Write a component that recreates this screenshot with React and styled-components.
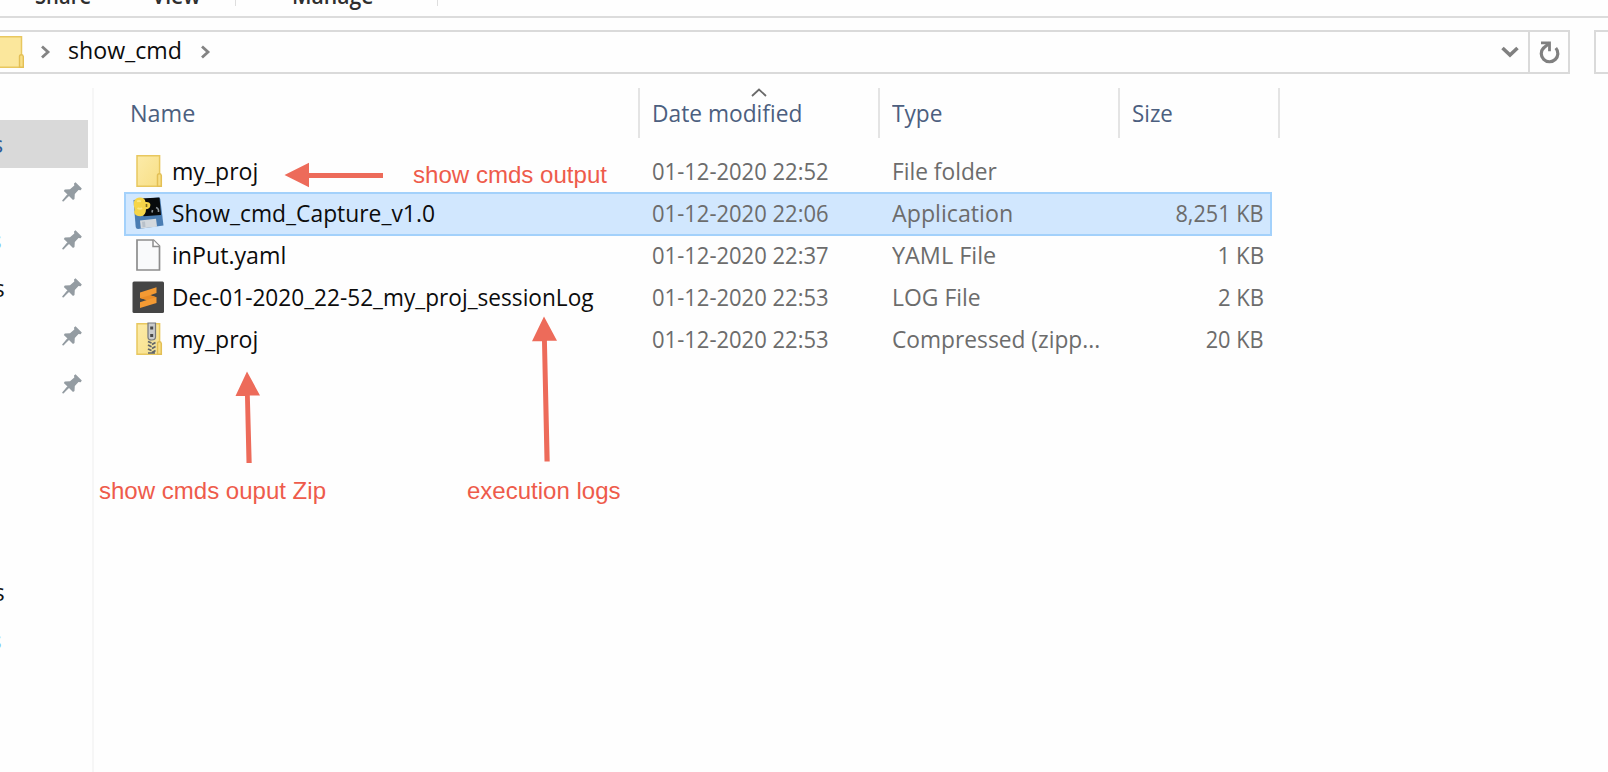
import React from "react";
import styled, { createGlobalStyle } from "styled-components";

const Global = createGlobalStyle`
  body { margin: 0; background: #fefefe; overflow: hidden; }
  * { box-sizing: border-box; }
`;

const Window = styled.div`
  position: relative;
  width: 1608px;
  height: 772px;
  overflow: hidden;
  display: flex;
  flex-direction: column;
  font: 23.5px/42px "Open Sans", "Noto Sans", sans-serif;
  color: #0c0c0c;
  white-space: nowrap;
`;

const Label = styled.span`
  display: inline-block;
  transform: scaleX(${(p) => p.$sx || 1});
  transform-origin: ${(p) => (p.$right ? "100%" : "0")} 50%;
`;

const Ribbon = styled.div`
  height: 18px;
  flex: none;
  display: flex;
  align-items: flex-start;
  overflow: hidden;
  border-bottom: 2px solid #dcdcdc;
`;
const RibbonTab = styled.div`
  flex: none;
  width: ${(p) => p.$w}px;
  padding-left: ${(p) => p.$pad}px;
  height: 40px;
  margin-top: -26px;
  color: #2f2f2f;
  font-weight: 600;
`;
const RibbonRule = styled.div`
  width: 1px;
  height: 6px;
  background: #dedede;
`;

const AddressRow = styled.div`
  display: flex;
  height: 44px;
  margin-top: 12px;
  flex: none;
`;
const AddressBox = styled.div`
  width: 1530px;
  flex: none;
  border: 2px solid #dadada;
  border-left: 0;
  display: flex;
  align-items: center;
`;
const Crumb = styled.div`
  width: 132px;
  margin-left: 17px;
  margin-top: -5px;
`;
const DropArrow = styled.svg`
  margin-left: auto;
  margin-right: 9px;
`;
const Refresh = styled.div`
  width: 40px;
  flex: none;
  border: 2px solid #dadada;
  border-left: 0;
  display: flex;
  align-items: center;
  justify-content: center;
`;
const SearchBox = styled.div`
  margin-left: 24px;
  width: 40px;
  flex: none;
  border: 2px solid #dadada;
`;

const Body = styled.div`
  display: flex;
  flex: 1;
  margin-top: 14px;
`;
const Sidebar = styled.div`
  width: 94px;
  border-right: 2px solid #f6f6f6;
  padding-top: 32px;
  flex: none;
`;
const SideRow = styled.div`
  height: 48px;
  width: 88px;
  margin-top: ${(p) => p.$gap || 0}px;
  display: flex;
  align-items: center;
  justify-content: space-between;
  padding-right: 6px;
  background: ${(p) => (p.$active ? "#d9d9d9" : "transparent")};
  color: ${(p) => p.$color};
  overflow: hidden;
`;
const SideText = styled.span`
  margin-left: ${(p) => p.$shift}px;
`;

const List = styled.div`
  width: 1156px;
  margin-left: 30px;
  display: flex;
  flex-direction: column;
`;
const Header = styled.div`
  display: flex;
  height: 50px;
  margin-bottom: 13px;
  color: #4c5f7f;
`;
const HeadCell = styled.div`
  position: relative;
  width: ${(p) => p.$w}px;
  flex: none;
  border-right: 2px solid #e4e4e4;
  padding: 4px 0 0 ${(p) => p.$pad}px;
`;
const SortMark = styled.svg`
  position: absolute;
  left: 111px;
  top: 0;
`;
const Row = styled.div`
  display: flex;
  align-items: center;
  width: 1148px;
  height: ${(p) => (p.$selected ? 44 : 42)}px;
  margin: ${(p) => (p.$selected ? "-1px 0" : "0")};
  background: ${(p) => (p.$selected ? "#d1e7fe" : "transparent")};
  box-shadow: ${(p) => (p.$selected ? "inset 0 0 0 2px #a3d1fb" : "none")};
`;
const IconCell = styled.div`
  width: 48px;
  height: 34px;
  padding-left: 8px;
  margin-top: -3px;
  flex: none;
`;
const Cell = styled.div`
  width: ${(p) => p.$w}px;
  flex: none;
  margin-top: -2px;
  color: ${(p) => (p.$dim ? "#6c6c6c" : "#0c0c0c")};
`;
const SizeCell = styled(Cell)`
  text-align: right;
`;

const Arrows = styled.svg`
  position: absolute;
  left: 0;
  top: 0;
`;
const Note = styled.div`
  position: absolute;
  left: ${(p) => p.$x}px;
  top: ${(p) => p.$y}px;
  color: #ee5b4b;
  font: 24px/28px "Liberation Sans", Arial, sans-serif;
`;

const FolderIcon = ({ zip }) => (
  <svg width="32" height="34" viewBox="0 0 32 34">
    <defs>
      <linearGradient id="fold" x1="0" y1="0" x2="1" y2="1">
        <stop offset="0" stopColor="#fceba9" />
        <stop offset="1" stopColor="#f8df86" />
      </linearGradient>
    </defs>
    <path d="M5 1.700h22.600v30.600H5z" fill="url(#fold)" stroke="#e8c75f" strokeWidth="1.500" />
    <path d="M25.500 32.300V21.500q0-1.800 1.800-1.800t2 1.800v10.800z" fill="#f8df86" stroke="#e3bf55" strokeWidth="1.500" />
    {zip && (
      <g>
        <path d="M15.500 2.400h9v29.200h-9z" fill="#efdf9a" />
        <path d="M16 1h7.500v14q0 3-3.800 3t-3.700-3z" fill="#c9cbcc" stroke="#77797c" strokeWidth="1.200" />
        <path d="M18.200 4.500h3v3h-3zM18.200 12h3v3h-3z" fill="#4a4a4a" />
        <path d="M16 19.500l3.500 1.600M23.500 20.500l-3.500 2M16 23l3.500 1.800M23.500 24.500l-3.500 2M16 27l3.500 1.600M23.500 28.500l-3.500 2M16 31h7" stroke="#606468" strokeWidth="1.700" />
      </g>
    )}
  </svg>
);
const AppIcon = () => (
  <svg width="34" height="34" viewBox="0 0 34 34">
    <path d="M1.500 4L26.500 1.500q1.500 0 1.800 1.500L31.500 29.500 6 33q-2 0-2.300-2z" fill="#4a7db3" />
    <path d="M9 2.500L27.500 1.500 29 19l-17.500 1.300z" fill="#080a0c" />
    <path d="M8 24.500l16-1.700 1 8L8.800 32.500z" fill="#d3d8dd" />
    <path d="M10 25.700l3-.3.500 5.500-3 .3z" fill="#b9c1ca" />
    <path d="M2 5.500Q3.500 1.500 8 1.500q5 0 5.500 4.500 4-.5 4.800 2 .5 4-2.800 5l-1.500.3q0 6.500-5.500 7-5.500 0-6.500-4.300 1.300-2 .3-4T2 5.500z" fill="#f6d548" />
    <path d="M5 5.500q2-1.200 4 0M5.500 12q2.500 1.500 4.500 0" fill="none" stroke="#fde87c" strokeWidth="2" />
    <path d="M14.500 8v3" stroke="#7c6a1e" strokeWidth="1.600" />
    <path d="M20 16.500l.5-2.500M24 11.500q3 1 2.500 4.500" fill="none" stroke="#8b9197" strokeWidth="1.600" />
  </svg>
);
const FileIcon = () => (
  <svg width="32" height="34" viewBox="0 0 32 34">
    <path d="M5 2h16.500l6 6v24H5z" fill="#f9fafb" stroke="#8d8d8d" strokeWidth="1.700" />
    <path d="M21 2v6.500h6.500" fill="#fff" stroke="#8d8d8d" strokeWidth="1.500" />
  </svg>
);
const SublimeIcon = () => (
  <svg width="34" height="34" viewBox="0 0 34 34">
    <rect x="0.500" y="1.500" width="31.500" height="31.500" rx="1.500" fill="#454545" />
    <path d="M8 12.500L24.500 7.300V13L18 15.300l6.500 2V23L8 28v-5.700l6.800-2.200L8 18z" fill="#f49a33" />
    <path d="M8 18l10-2.700 6.500 2-9.700 2.800z" fill="#ea8d28" />
  </svg>
);
const Pin = () => (
  <svg width="20" height="20" viewBox="0 0 20 20">
    <path d="M13.500 0.300L19.800 6.500 18.700 8.300 16.500 8 12.800 12 12.500 17 11 18 7 14 1 19.600 0.300 19 5.500 12.500 1.800 9 2.800 7.500 8 7.300 12.300 3.500 12 1.500z" fill="#949ca2" />
    <path d="M6 13L0.800 19" stroke="#949ca2" strokeWidth="1.800" />
  </svg>
);
const Chevron = () => (
  <svg width="11" height="14" viewBox="0 0 11 14">
    <path d="M2 1.500l6 5.500-6 5.500" fill="none" stroke="#838383" strokeWidth="2.800" />
  </svg>
);
const AddressFolder = () => (
  <svg width="40" height="34" viewBox="5 0 40 34">
    <path d="M0 1.700h26.500v30.600H0z" fill="#fbe79c" stroke="#e8c75f" strokeWidth="1.500" />
    <path d="M24.500 32.300V21.500q0-1.800 1.800-1.800t2 1.800v10.800z" fill="#f8df86" stroke="#e3bf55" strokeWidth="1.400" />
  </svg>
);

const rows = [
  { icon: <FolderIcon />, name: "my_proj", nx: 0.982, date: "01-12-2020 22:52", type: "File folder", tx: 0.967 },
  { icon: <AppIcon />, name: "Show_cmd_Capture_v1.0", nx: 0.972, date: "01-12-2020 22:06", type: "Application", tx: 0.988, size: "8,251 KB", sx: 0.922, selected: true },
  { icon: <FileIcon />, name: "inPut.yaml", nx: 0.985, date: "01-12-2020 22:37", type: "YAML File", tx: 0.995, size: "1 KB", sx: 0.95 },
  { icon: <SublimeIcon />, name: "Dec-01-2020_22-52_my_proj_sessionLog", nx: 0.963, date: "01-12-2020 22:53", type: "LOG File", tx: 0.975, size: "2 KB", sx: 0.94 },
  { icon: <FolderIcon zip />, name: "my_proj", nx: 0.982, date: "01-12-2020 22:53", type: "Compressed (zipp...", tx: 0.968, size: "20 KB", sx: 0.925 },
];
const side = [
  { color: "#2b5b96", active: true, shift: -8 },
  { pin: true },
  { pin: true, color: "#7dc0f8", shift: -9.5 },
  { pin: true, color: "#111", shift: -6.5 },
  { pin: true },
  { pin: true },
  { color: "#111", shift: -6.5, gap: 160 },
  { color: "#7dc0f8", shift: -9.5 },
];

export default function App() {
  return (
    <Window>
      <Global />
      <Ribbon>
        <RibbonTab $w={152} $pad={35}><Label $sx={0.86}>Share</Label></RibbonTab>
        <RibbonTab $w={83} $pad={0}><Label $sx={0.9}>View</Label></RibbonTab>
        <RibbonRule />
        <RibbonTab $w={201} $pad={56}><Label $sx={0.9}>Manage</Label></RibbonTab>
        <RibbonRule />
      </Ribbon>
      <AddressRow>
        <AddressBox>
          <AddressFolder />
          <Chevron />
          <Crumb><Label $sx={0.985}>show_cmd</Label></Crumb>
          <Chevron />
          <DropArrow width="18" height="14" viewBox="0 0 18 14">
            <path d="M1.500 3l7.500 7 7.500-7" fill="none" stroke="#808080" strokeWidth="3.600" />
          </DropArrow>
        </AddressBox>
        <Refresh>
          <svg width="22" height="24" viewBox="0 0 22 24">
            <path d="M5.500 7.800a8.300 8.300 0 1 0 12.300 .2" fill="none" stroke="#808080" strokeWidth="3.200" />
            <path d="M3 2.800h8.500v8.500" fill="none" stroke="#808080" strokeWidth="2.800" />
            <path d="M11.500 3L5 8.500" stroke="#808080" strokeWidth="3" />
          </svg>
        </Refresh>
        <SearchBox />
      </AddressRow>
      <Body>
        <Sidebar>
          {side.map((s, i) => (
            <SideRow key={i} $active={s.active} $color={s.color} $gap={s.gap}>
              <SideText $shift={s.shift || 0}>{s.color ? "s" : ""}</SideText>
              {s.pin && <Pin />}
            </SideRow>
          ))}
        </Sidebar>
        <List>
          <Header>
            <HeadCell $w={516} $pad={5.5}><Label $sx={0.995}>Name</Label></HeadCell>
            <HeadCell $w={240} $pad={12}>
              <Label $sx={0.968}>Date modified</Label>
              <SortMark width="16" height="9" viewBox="0 0 16 9">
                <path d="M1 8l7-6.500L15 8" fill="none" stroke="#6a6a6a" strokeWidth="1.800" />
              </SortMark>
            </HeadCell>
            <HeadCell $w={240} $pad={12}><Label $sx={0.965}>Type</Label></HeadCell>
            <HeadCell $w={160} $pad={12}><Label $sx={0.95}>Size</Label></HeadCell>
          </Header>
          {rows.map((r, i) => (
            <Row key={i} $selected={r.selected}>
              <IconCell>{r.icon}</IconCell>
              <Cell $w={480}><Label $sx={r.nx}>{r.name}</Label></Cell>
              <Cell $w={240} $dim><Label $sx={0.936}>{r.date}</Label></Cell>
              <Cell $w={239} $dim><Label $sx={r.tx}>{r.type}</Label></Cell>
              <SizeCell $w={133} $dim>{r.size && <Label $right $sx={r.sx}>{r.size}</Label>}</SizeCell>
            </Row>
          ))}
        </List>
      </Body>
      <Arrows width="1608" height="772" fill="#ed6b5a">
        <path d="M284.500 175L309 162.800V173H383V178H309V187.200z" />
        <path d="M247 371.500L260 395.500H249.800L251.700 463H246.500L245 396H235.500z" />
        <path d="M544 316.500L557 340.800H546.900L549.700 461.500H544.500L542 341.200H532z" />
      </Arrows>
      <Note $x={412.5} $y={161}><Label $sx={1.003}>show cmds output</Label></Note>
      <Note $x={99} $y={477}><Label $sx={1.001}>show cmds ouput Zip</Label></Note>
      <Note $x={466.5} $y={477}><Label $sx={1.001}>execution logs</Label></Note>
    </Window>
  );
}
